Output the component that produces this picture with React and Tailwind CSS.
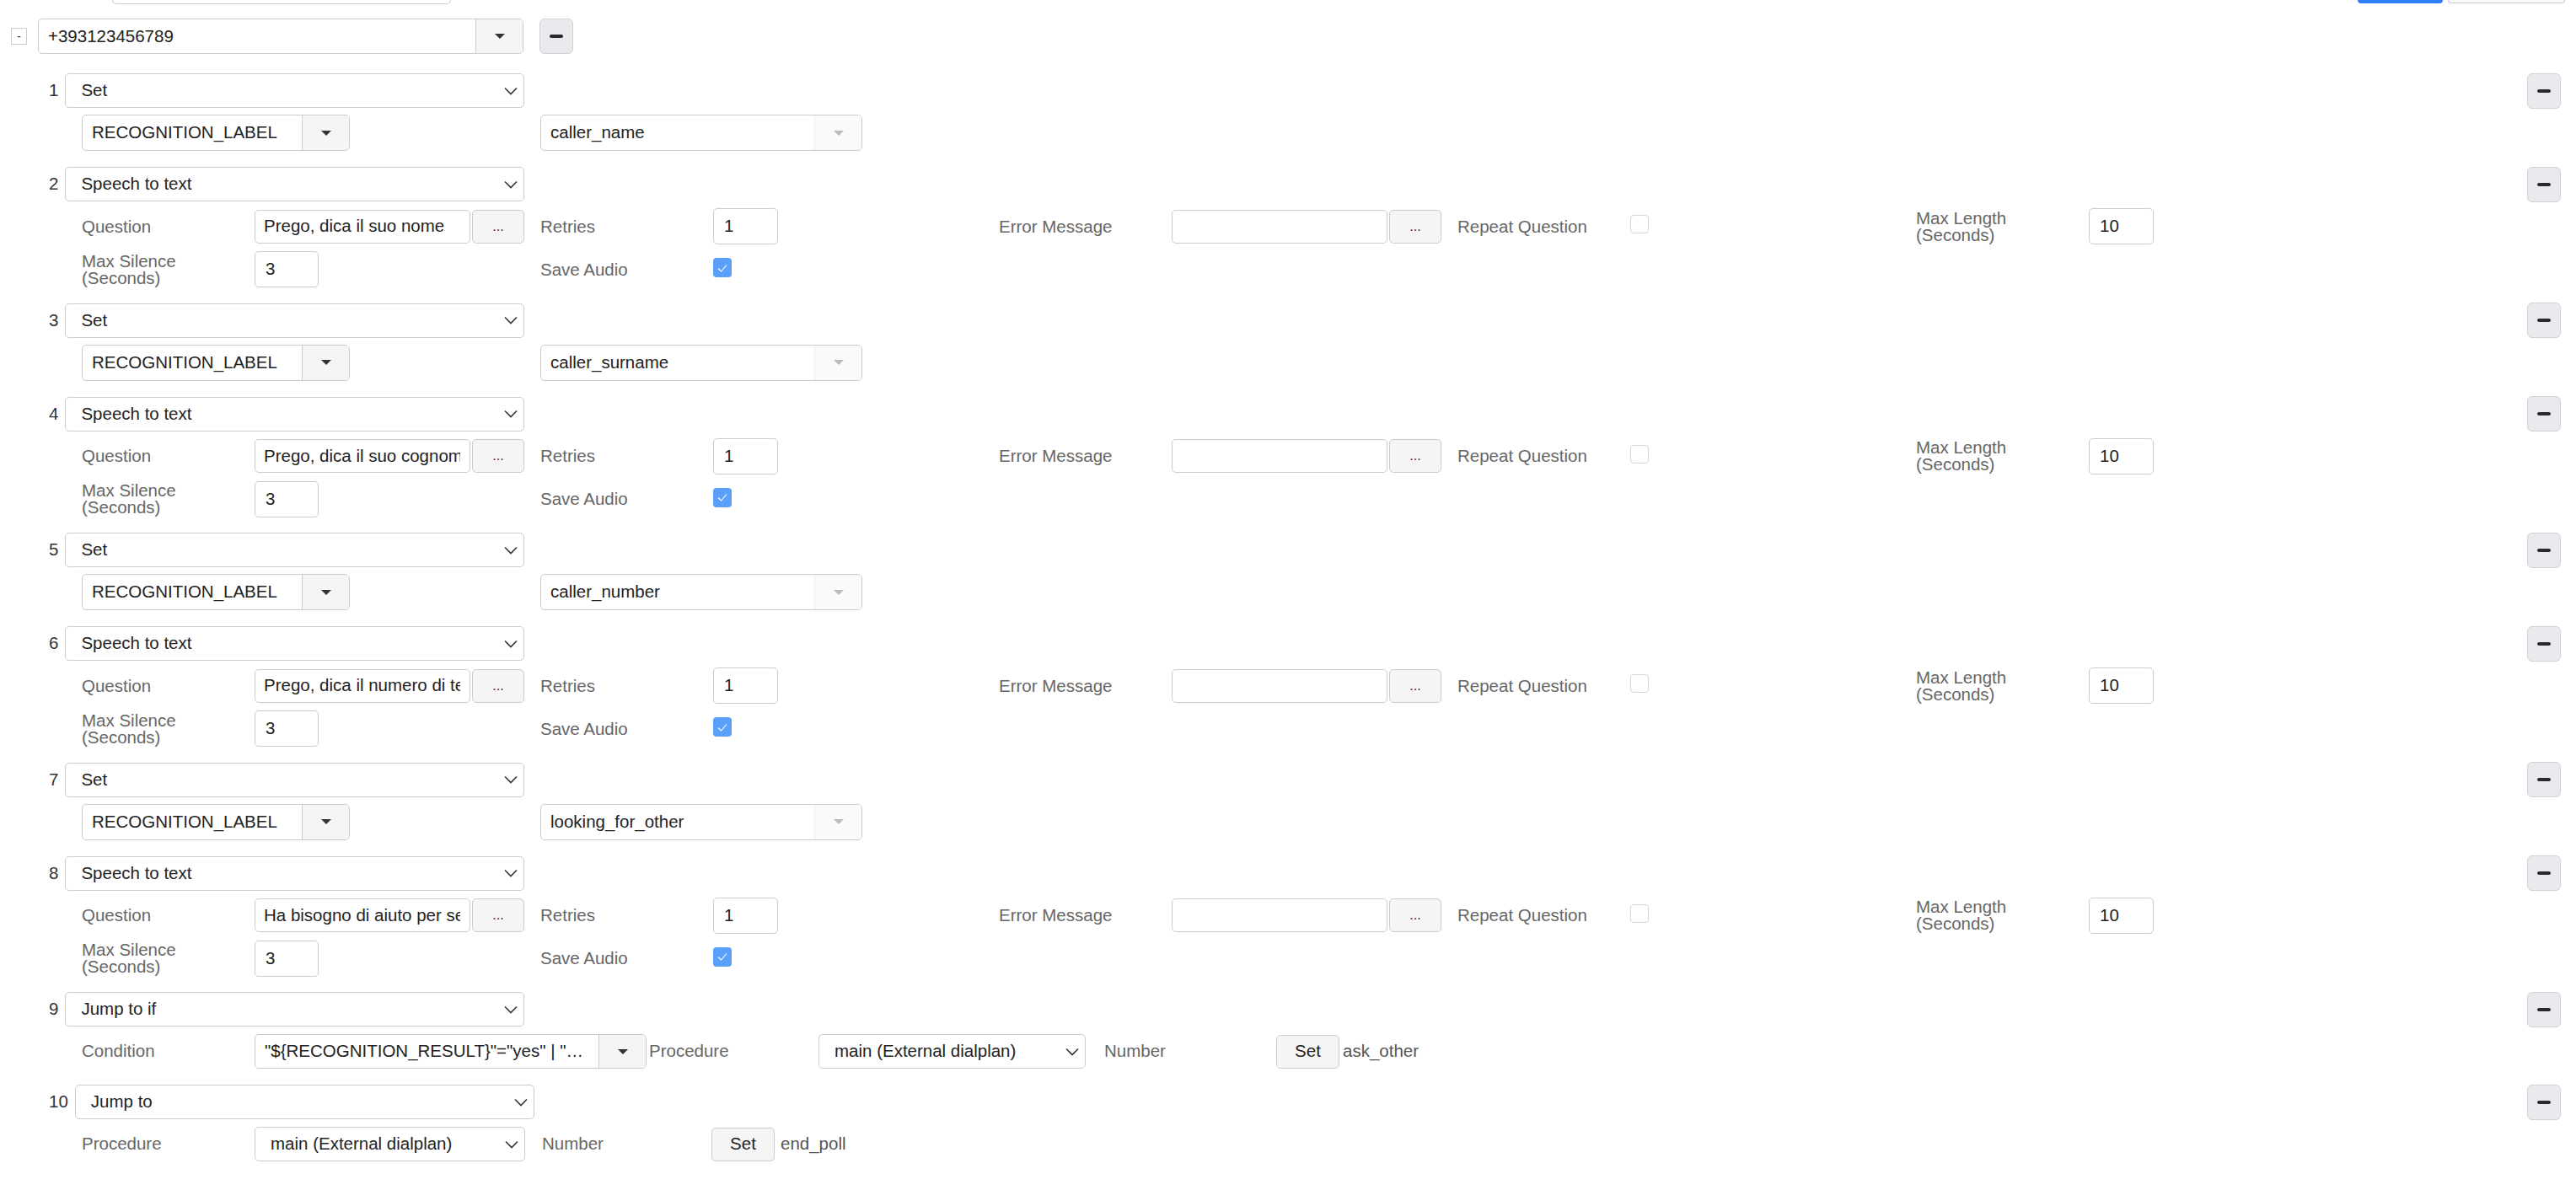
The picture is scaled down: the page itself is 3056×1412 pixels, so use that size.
import React from "react";

const steps = [
  { type: "set", val: "caller_name" },
  { type: "stt", q: "Prego, dica il suo nome" },
  { type: "set", val: "caller_surname" },
  { type: "stt", q: "Prego, dica il suo cognome" },
  { type: "set", val: "caller_number" },
  { type: "stt", q: "Prego, dica il numero di telefono" },
  { type: "set", val: "looking_for_other" },
  { type: "stt", q: "Ha bisogno di aiuto per se stesso o per un altro?" },
];

const Chevron = () => (
  <svg width="16" height="10" viewBox="0 0 16 10" className="shrink-0">
    <path d="M1 1.5 L8 8.5 L15 1.5" fill="none" stroke="#333" strokeWidth="1.6" />
  </svg>
);

const Caret = ({ color = "#333" }) => (
  <svg width="12" height="6" viewBox="0 0 12 6">
    <path d="M0 0 H12 L6 6 Z" fill={color} />
  </svg>
);

const Minus = () => (
  <div className="w-[40px] h-[42px] shrink-0 flex items-center justify-center bg-[#e9eaee] border border-[#d0d1d5] rounded-[6px]">
    <div className="w-[16px] h-[4px] bg-[#2a2a2a] rounded-[2px]" />
  </div>
);

const Select = ({ value, w = "w-[545px]" }) => (
  <div className={`${w} h-[41px] shrink-0 flex items-center justify-between bg-white border border-[#ccc] rounded-[5px] pl-[18px] pr-[7px] text-[#222]`}>
    <span className="whitespace-nowrap">{value}</span>
    <Chevron />
  </div>
);

const Combo = ({ value, w, h = "h-[43px]", disabled }) => (
  <div className={`${w} ${h} shrink-0 flex bg-white border border-[#ccc] rounded-[5px] overflow-hidden`}>
    <div className="flex-1 min-w-0 flex items-center pl-[11px] text-[#222] whitespace-nowrap overflow-hidden">{value}</div>
    <div
      className={
        disabled
          ? "w-[56px] shrink-0 flex items-center justify-center border-l border-[#eee] bg-[#fafafa]"
          : "w-[56px] shrink-0 flex items-center justify-center border-l border-[#ccc] bg-[#f5f5f5]"
      }
    >
      <Caret color={disabled ? "#bbb" : "#333"} />
    </div>
  </div>
);

// text field clips at its content box, like a native input
const TextWithBtn = ({ value }) => (
  <div className="flex gap-[2px] h-[40px] shrink-0">
    <div className="w-[256px] bg-white border border-[#ccc] rounded-[5px] flex items-center pl-[10px] pr-[11px] text-[#222]">
      <div className="flex-1 min-w-0 overflow-hidden whitespace-nowrap">{value}</div>
    </div>
    <div className="w-[62px] bg-[#f5f5f5] border border-[#ccc] rounded-[5px] flex items-center justify-center text-[16px] text-[#333]">
      ...
    </div>
  </div>
);

const NumInput = ({ value, w = "w-[77px]" }) => (
  <div className={`${w} h-[43px] shrink-0 bg-white border border-[#ccc] rounded-[5px] flex items-center pl-[12px] text-[#222]`}>
    {value}
  </div>
);

const Check = ({ on }) =>
  on ? (
    <div className="w-[22px] h-[23px] mb-[4px] rounded-[4px] bg-[#5aa0fa] flex items-center justify-center">
      <svg width="16" height="16" viewBox="0 0 16 16">
        <path d="M3 8.5 L6.5 12 L13 4.5" fill="none" stroke="#fff" strokeWidth="1.1" />
      </svg>
    </div>
  ) : (
    <div className="w-[22px] h-[22px] mb-[5px] rounded-[4px] bg-white border border-[#d6d6d6]" />
  );

const Cell = ({ label, children }) => (
  <div className="w-[544px] shrink-0 flex items-center">
    <div className="w-[205px] shrink-0 text-[#666] leading-[20px]">{label}</div>
    {children}
  </div>
);

const Header = ({ n, value }) => (
  <div className="flex items-center h-[41px]">
    <span className="mr-[8px] text-[#333]">{n}</span>
    <Select value={value} />
    <div className="ml-auto">
      <Minus />
    </div>
  </div>
);

const SetBlock = ({ n, val }) => (
  <div className="flex flex-col gap-[8px] pb-[19px]">
    <Header n={n} value="Set" />
    <div className="flex items-center h-[43px] pl-[39px]">
      <div className="w-[544px] shrink-0">
        <Combo value="RECOGNITION_LABEL" w="w-[318px]" />
      </div>
      <Combo value={val} w="w-[382px]" disabled />
    </div>
  </div>
);

const SpeechBlock = ({ n, q }) => (
  <div className="flex flex-col gap-[8px] pb-[18.5px]">
    <Header n={n} value="Speech to text" />
    <div className="flex items-center h-[43px] pl-[39px]">
      <Cell label="Question">
        <TextWithBtn value={q} />
      </Cell>
      <Cell label="Retries">
        <NumInput value="1" />
      </Cell>
      <Cell label="Error Message">
        <TextWithBtn value="" />
      </Cell>
      <Cell label="Repeat Question">
        <Check />
      </Cell>
      <Cell label={<>Max Length<br />(Seconds)</>}>
        <NumInput value="10" />
      </Cell>
    </div>
    <div className="flex items-center h-[43px] pl-[39px]">
      <Cell label={<>Max Silence<br />(Seconds)</>}>
        <NumInput value="3" w="w-[76px]" />
      </Cell>
      <Cell label="Save Audio">
        <Check on />
      </Cell>
    </div>
  </div>
);

const SetButton = () => (
  <div className="w-[75px] h-[40px] shrink-0 bg-[#f5f5f5] border border-[#ccc] rounded-[5px] flex items-center justify-center text-[#222]">
    Set
  </div>
);

export default function App() {
  return (
    <div className="w-[3056px] min-h-[1412px] bg-white font-[Liberation_Sans,Arial,sans-serif] text-[20.5px] text-[#222] overflow-hidden">
      {/* toolbar cut off at the top */}
      <div className="flex h-[5px]">
        <div className="ml-[133px] w-[402px] h-[5px] border border-t-0 border-[#ccc] rounded-b-[5px]" />
        <div className="ml-auto w-[101px] h-[4px] bg-[#2d7ef7] rounded-b-[5px]" />
        <div className="ml-[6px] mr-[13px] w-[139px] h-[4px] border border-t-0 border-[#ccc] bg-[#f8f8f8] rounded-b-[5px]" />
      </div>

      {/* caller number */}
      <div className="flex items-center mt-[17px] pl-[13px] h-[42px]">
        <div className="w-[19px] h-[20px] border border-[#ccc] flex items-center justify-center text-[14px] text-[#333] leading-none">
          -
        </div>
        <div className="ml-[13px]">
          <Combo value="+393123456789" w="w-[576px]" h="h-[42px]" />
        </div>
        <div className="ml-[19px]">
          <Minus />
        </div>
      </div>

      {/* steps */}
      <div className="flex flex-col mt-[23px] pl-[58px] pr-[18px]">
        {steps.map((s, i) =>
          s.type === "set" ? (
            <SetBlock key={i} n={i + 1} val={s.val} />
          ) : (
            <SpeechBlock key={i} n={i + 1} q={s.q} />
          )
        )}

        <div className="flex flex-col gap-[9px] pb-[19px]">
          <Header n={9} value="Jump to if" />
          <div className="flex items-center h-[41px] pl-[39px]">
            <div className="w-[205px] shrink-0 text-[#666]">Condition</div>
            <Combo value={'"${RECOGNITION_RESULT}"="yes" | "…'} w="w-[465px]" h="h-[41px]" />
            <div className="ml-[3px] w-[201px] shrink-0 text-[#666]">Procedure</div>
            <Select value="main (External dialplan)" w="w-[317px]" />
            <div className="ml-[22px] w-[204px] shrink-0 text-[#666]">Number</div>
            <SetButton />
            <span className="ml-[4px] text-[#555]">ask_other</span>
          </div>
        </div>

        <div className="flex flex-col gap-[9px]">
          <Header n={10} value="Jump to" />
          <div className="flex items-center h-[41px] pl-[39px]">
            <div className="w-[205px] shrink-0 text-[#666]">Procedure</div>
            <Select value="main (External dialplan)" w="w-[321px]" />
            <div className="ml-[20px] w-[201px] shrink-0 text-[#666]">Number</div>
            <SetButton />
            <span className="ml-[7px] text-[#555]">end_poll</span>
          </div>
        </div>
      </div>
    </div>
  );
}
